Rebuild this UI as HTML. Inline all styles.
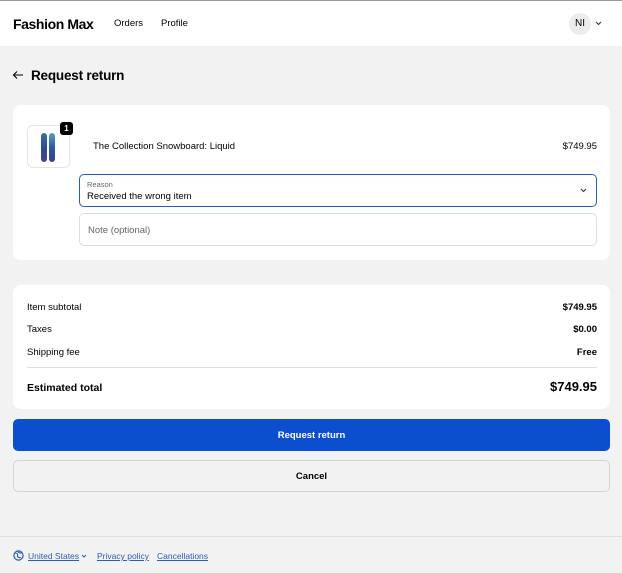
<!DOCTYPE html>
<html><head><style>
*{box-sizing:border-box;margin:0;padding:0}
body{width:622px;height:573px;background:#f2f2f2;font-family:"Liberation Sans",sans-serif;color:#000;position:relative;overflow:hidden;font-size:10px}
.hdr{position:absolute;left:0;top:0;width:622px;height:46px;background:#fff;border-top:1px solid #9a9a9a}
.abs{position:absolute}
.card{position:absolute;left:13px;width:597px;background:#fff;border-radius:8px}
.row{position:absolute;left:14px;right:13px;display:flex;justify-content:space-between;font-size:9.5px}
</style></head><body>
<div class="hdr">
<div class="abs" style="left:13px;top:15px;font-size:14px;font-weight:bold;letter-spacing:-0.4px">Fashion Max</div>
<div class="abs" style="left:114px;top:17px;font-size:9.5px">Orders</div>
<div class="abs" style="left:161px;top:17px;font-size:9.5px">Profile</div>
<div class="abs" style="left:569px;top:12px;width:22px;height:22px;border-radius:50%;background:#ececec;font-size:10px;text-align:center;line-height:22px">NI</div>
<svg class="abs" style="left:595px;top:20px" width="7" height="5" viewBox="0 0 7 5"><path d="M1 1l2.5 2.5L6 1" stroke="#333" fill="none" stroke-width="1.1"/></svg>
</div>
<svg class="abs" style="left:12px;top:70px" width="12" height="10" viewBox="0 0 12 10"><path d="M11 5H1.5M5 1.5L1.5 5 5 8.5" stroke="#000" fill="none" stroke-width="1.1"/></svg>
<div class="abs" style="left:31px;top:68px;font-size:13.5px;font-weight:bold;letter-spacing:-0.2px">Request return</div>

<div class="card" style="top:105px;height:155px">
<div class="abs" style="left:14px;top:20px;width:43px;height:43px;border:1px solid #e4e4e4;border-radius:6px;background:#fff">
<div class="abs" style="left:13px;top:7px;width:6px;height:29px;border-radius:3px;background:linear-gradient(#3a6fa8,#2a4f8f,#4a3f8a)"></div>
<div class="abs" style="left:21px;top:7px;width:6px;height:29px;border-radius:3px;background:linear-gradient(#5a9ec8,#2a5b9f,#3a3f8a)"></div>
</div>
<div class="abs" style="left:47px;top:17px;width:13px;height:13px;border-radius:3px;background:#000;color:#fff;font-size:8px;font-weight:bold;text-align:center;line-height:13px">1</div>
<div class="abs" style="left:80px;top:36px;font-size:9.5px">The Collection Snowboard: Liquid</div>
<div class="abs" style="right:13px;top:36px;font-size:9.5px">$749.95</div>
<div class="abs" style="left:66px;top:69px;width:518px;height:33px;border:1.5px solid #1f5fbf;border-radius:5px">
<div class="abs" style="left:7px;top:5px;font-size:7.5px;color:#666">Reason</div>
<div class="abs" style="left:7px;top:16px;font-size:9.5px">Received the wrong item</div>
<svg class="abs" style="right:9px;top:13px" width="7" height="5" viewBox="0 0 7 5"><path d="M1 1l2.5 2.5L6 1" stroke="#333" fill="none" stroke-width="1.1"/></svg>
</div>
<div class="abs" style="left:66px;top:108px;width:518px;height:33px;border:1px solid #ddd;border-radius:5px">
<div class="abs" style="left:8px;top:11px;font-size:9.5px;color:#666">Note (optional)</div>
</div>
</div>

<div class="card" style="top:285px;height:124px">
<div class="row" style="top:17px"><span>Item subtotal</span><b>$749.95</b></div>
<div class="row" style="top:39px"><span>Taxes</span><b>$0.00</b></div>
<div class="row" style="top:62px"><span>Shipping fee</span><b>Free</b></div>
<div class="abs" style="left:14px;right:13px;top:82px;border-top:1px solid #ddd"></div>
<div class="row" style="top:94px;font-size:10.5px;font-weight:bold;align-items:baseline"><span>Estimated total</span><span style="font-size:13px">$749.95</span></div>
</div>

<div class="abs" style="left:13px;top:419px;width:597px;height:32px;background:#0b4fcf;border-radius:5px;color:#fff;font-weight:bold;font-size:9.5px;text-align:center;line-height:34px">Request return</div>
<div class="abs" style="left:13px;top:460px;width:597px;height:32px;background:#f2f2f2;border:1px solid #d4d4d4;border-radius:5px;font-weight:bold;font-size:9.5px;text-align:center;line-height:32px">Cancel</div>

<div class="abs" style="left:0;top:536px;width:622px;border-top:1px solid #ddd"></div>
<svg class="abs" style="left:13px;top:550px" width="11" height="11" viewBox="0 0 11 11"><circle cx="5.5" cy="5.5" r="4.6" stroke="#2a5bbf" fill="none" stroke-width="1.2"/><path d="M2 3c2 0 3 1 2.5 2.5S6 8 8 7.5M5 1c0 2 2 2 4 2" stroke="#2a5bbf" fill="none" stroke-width="1"/></svg>
<div class="abs" style="left:28px;top:551px;font-size:8.5px;color:#2a5bbf;text-decoration:underline">United States</div>
<svg class="abs" style="left:81px;top:554px" width="6" height="4" viewBox="0 0 6 4"><path d="M1 1l2 2 2-2" stroke="#2a5bbf" fill="none"/></svg>
<div class="abs" style="left:97px;top:551px;font-size:8.5px;color:#2a5bbf;text-decoration:underline">Privacy policy</div>
<div class="abs" style="left:157px;top:551px;font-size:8.5px;color:#2a5bbf;text-decoration:underline">Cancellations</div>
</body></html>
